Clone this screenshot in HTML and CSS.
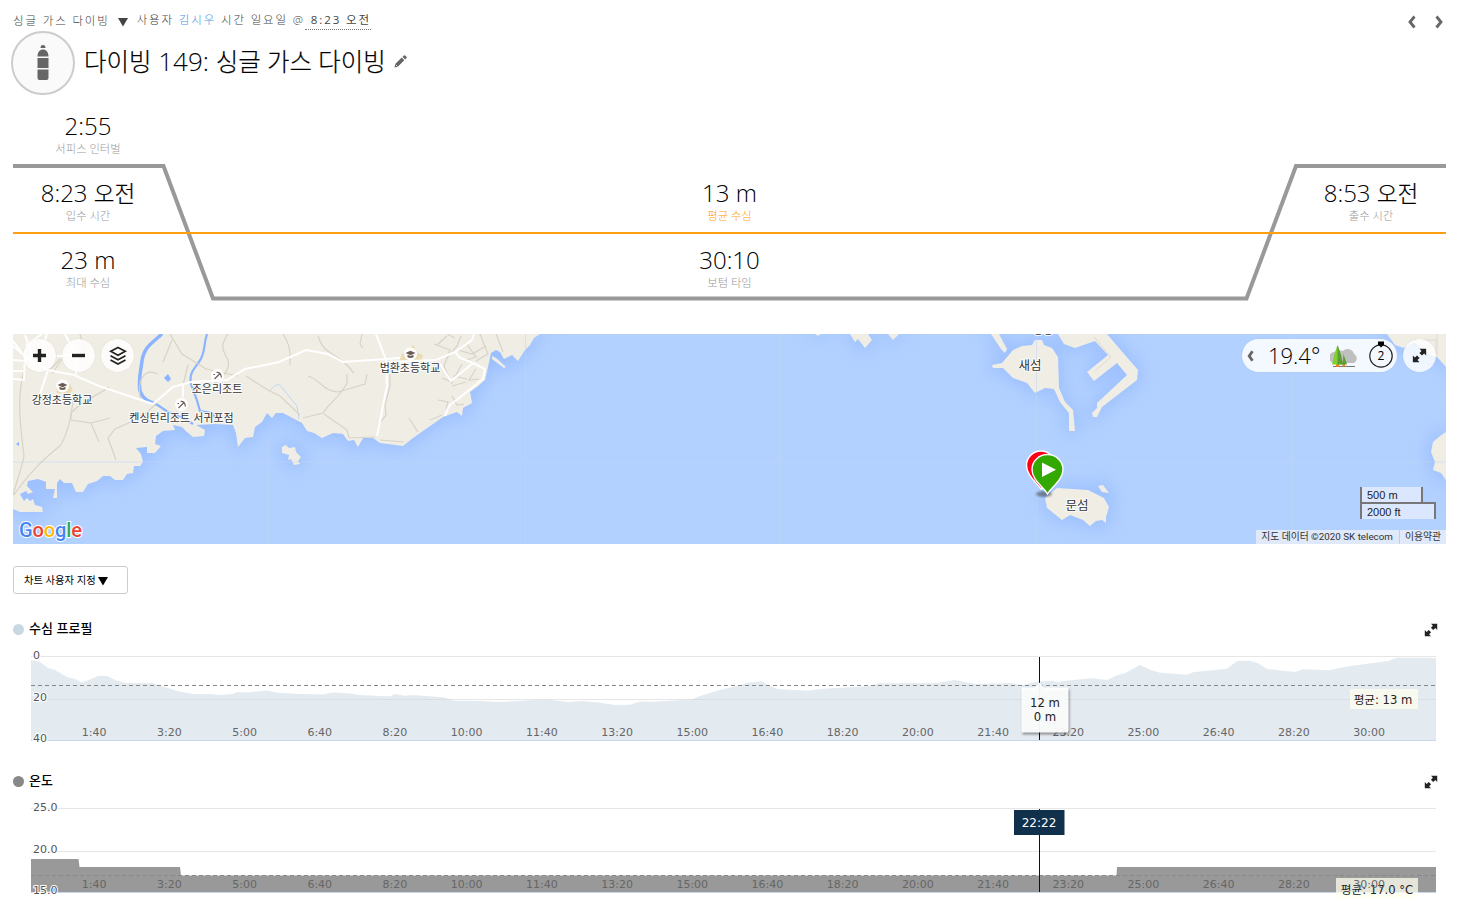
FILE: index.html
```
<!DOCTYPE html>
<html lang="ko">
<head>
    <meta charset="UTF-8">
    <meta name="viewport" content="width=device-width, initial-scale=1.0">
    <title>다이빙 149: 싱글 가스 다이빙</title>
    <link rel="stylesheet" href="styles.css">
</head>
<body>
    <div class="page">
        <header class="header">
            <div class="meta">
                <span>싱글 가스 다이빙</span>
                <svg class="caret" width="10" height="9" viewBox="0 0 10 9"><path d="M0 0h10L5 8.5z"/></svg>
                <span>사용자 <a href="#">김시우</a> 시간 일요일 @<span class="time"> 8:23 오전</span></span>
            </div>
            <nav class="pager">
                <svg width="8" height="14" viewBox="0 0 8 14"><path d="M6.500 1.500L2 7l4.500 5.500"/></svg>
                <svg width="8" height="14" viewBox="0 0 8 14"><path d="M1.500 1.500L6 7l-4.500 5.500"/></svg>
            </nav>
        </header>
        <div class="title">
            <div class="type-icon">
                <svg width="12" height="36" viewBox="0 0 12 36">
                    <path d="M3.500 3a2.500 3 0 0 1 5 0zM.5 11.500C.5 7 3 4.500 6 4.500s5.500 2.500 5.500 7zM.5 13h11v10H.5zM.5 24.500h11V33q0 2-2 2h-7q-2 0-2-2z"/>
                </svg>
            </div>
            <h1><span class="ko">다이빙</span> 149: <span class="ko">싱글 가스 다이빙</span></h1>
            <svg class="pencil" width="13" height="13" viewBox="0 0 13 13"><path d="M8.500 1.800l1.400-1.400q.6-.5 1.200 0l1.400 1.400q.5.600 0 1.200L11.100 4.400zM7.700 2.600l2.600 2.600-6.500 6.500L.5 12.500l.7-3.400z"/><path class="tip" d="M1.700 9.700l1.600 1.600"/></svg>
        </div>

        <section class="dive">
            <svg class="dive-line" width="1433" height="202" viewBox="0 0 1433 202">
                <path class="profile" d="M0 67h150.500l49.500 132.500h1033.500L1283 67h150"/>
                <path class="average" d="M0 134h1433"/>
            </svg>
            <div class="stat"><b>2:55</b><span>서피스 인터벌</span></div>
            <div></div>
            <div></div>
            <div class="stat"><b>8:23 <span class="ko">오전</span></b><span>입수 시간</span></div>
            <div class="stat avg"><b>13 m</b><span>평균 수심</span></div>
            <div class="stat"><b>8:53 <span class="ko">오전</span></b><span>출수 시간</span></div>
            <div class="stat"><b>23 m</b><span>최대 수심</span></div>
            <div class="stat"><b>30:10</b><span>보텀 타임</span></div>
            <div></div>
        </section>

        <section class="map">
            <svg class="tiles" width="1433" height="210" viewBox="13 334 1433 210">
                <defs>
                    <filter id="shallow" x="-20%" y="-20%" width="140%" height="140%"><feGaussianBlur stdDeviation="9"/></filter>
                    <filter id="soft"><feGaussianBlur stdDeviation="1"/></filter>
                    <g id="land">
                        <path d="M13 334V509L20 512 43 512 42 507 35 505 33 499 30 501 27 498 24 501 20 494 26 491 28 494 33 492 27 486 28 481 38 479 46 482 46 489 55 489 53 498 57 498 57 483 60 479 64 483 72 483 76 492 83 492 88 484 97 481 103 476 110 476 115 480 123 480 127 474 133 473 134 466 140 466 143 462 141 454 136 448 147 447 147 453 155 453 161 446 155 444 156 436 163 431 175 430 173 425 182 427 187 432 193 437 204 436 205 430 196 425 215 424 233 425 236 433 238 447 245 438 253 437 255 427 262 422 267 413 272 418 276 413 283 413 302 423 307 431 314 433 322 438 333 433 343 434 348 441 354 440 358 447 363 438 373 438 380 443 403 446 413 438 443 417 457 412 462 416 463 408 472 403 470 392 477 387 485 380 488 367 491 353 496 350 500 352 504 359 512 355 518 361 525 350 530 345 534 338 540 334z"/>
                        <path d="M282 447L286 445 289 448 295 447 296 452 301 457 298 461 300 464 294 465 291 459 288 460 289 455 282 453z"/>
                        <path d="M492 356l4 2 10 9-2 1-12-9z"/>
                        <path d="M850 334l5 8 3-3 7 9 7-8-4-6zM888 334l5 6 6-6zM815 334l3 2 3-2z"/>
                        <path d="M991 334h8l8 15-2 4-4-4zM992 365L1002 363 1013 350 1022 346 1032 345 1035 340 1042 340 1044 345 1052 348 1058 357 1059 388 1065 402 1073 410 1075 431 1069 431 1069 413 1060 402 1054 389 1045 388 1035 393 1027 383 1013 378 1003 368 993 368z"/>
                        <path d="M1058 334L1064 344 1075 348 1095 341 1108 355 1087 372 1094 381 1117 363 1127 375 1097 403 1097 408 1092 413 1093 417 1097 417 1102 407 1137 380 1138 370 1125 355 1107 334z"/>
                        <path d="M1045 498L1057 488 1088 490 1104 498 1109 507 1106 517 1106 523 1102 520 1096 521 1090 526 1083 520 1070 515 1062 520 1047 508zM1098 486L1103 485 1109 493 1102 492z"/>
                        <path d="M1446 432L1440 436 1433 442 1431 452 1435 462 1433 470 1441 473 1446 480zM1387 334l8 11 9 3 10-6 16 13 7 2 9 10v-33z"/>
                    </g>
                </defs>
                <rect class="sea" x="13" y="334" width="1433" height="210"/>
                <use class="shore" href="#land"/>
                <use class="ground" href="#land"/>
                <path class="tile-edge" d="M13 462h1433M268.500 440v104M525.500 334v210M780.500 334v210M1036.500 334v210M1292.500 334v210"/>
                <path class="school" d="M56 387l14-3 3 6-4 4-12-1zM402 354l12-9 2 7 7 3-2 7h-22z"/>
                <g class="water">
                    <path d="M162 334C152 343 144 347 142 361 141 370 138 379 140 391 143 400 150 402 156 404"/>
                    <path class="mid" d="M156 404l12 8 17 7 8 5M207 334c-4 12-1 18-8 28-6 8-10 12-8 22 4 11 6 15 9 27l12 2 4 6"/>
                    <path class="thin" d="M269 391c7-7 10-9 14-2l14 17 2 13"/>
                </g>
                <path class="pond" d="M164 378l4-4 3 5-3 3zM16 444l3-2v4z"/>
                <g class="paths">
                    <path d="M24 370c-8 30-3 60 0 86-2 12-7 24-11 39M74 393c-2 20-5 40-14 53-16 12-35 32-46 49"/>
                    <path d="M109 387c-10 8-25 12-38 26v7l20 3 8 19M160 398c-10 15-22 21-29 24l-16 7-7 9 8 22M91 423l19-5"/>
                    <path d="M52 374l12-18M40 370l12-2 8-9M80 334l5 20M172 340l-9 22M158 374c-14-7-22 7-17 27M170 334l12 20 24 15 32 7M228 334c-8 12-6 15 0 26 3 11-9 20-14 24M246 376c10 6 18 13 34 20l20 19M183 385l5-20"/>
                    <path d="M283 334c5 8 8 14 7 31M318 336c5 15 12 16 20 22 9 5 11 10 16 15M362 334l-2 10 3 4M308 376c14 5 15 15 30 16l27-8 2-10M347 374v9c-6 13-18 20-24 30l-20 5M324 414l23 16 2 8 26-1M390 374v12l-5 19 1 10-8 10M409 418l9 14M380 440l24 2M430 420l12-5"/>
                    <path d="M434 344l16 6-6 16 8 18M447 358l10-12 4-10M458 350l14 4 14-8M455 338l-8-4M462 364l-10 18-10-4M453 376l14 3M452 386l14-4M437 345l10-9M452 396l5 9 7-1M438 400l10 2-2 7M466 343l10 14-12 4M476 369l-7 11 10-1M496 334l7 18M480 334l8 20-12 7"/>
                </g>
                <g class="roads">
                    <path d="M13 341l13 17 22 12 26 5 25 11 54 18 20-17 18-5 36-2 18-11 34-7 27-12 22 4 15 8 57-4"/>
                    <path d="M376 334l10 26 1 26-10 50M386 362l50-2 19-8 17-12 2-6M455 352l5 6 13 5 12 6-2 10-34 27-4 10M473 363l-22 18-11-17"/>
                    <path d="M13 346l12 10-1 24-11-1M26 358l14-4 7-20M48 370l-8 24M76 374l1-17-12-23M25 346l17-12M13 360l12 1M183 385v12M13 371l11 0M25 335l8 24M57 356l18-1"/>
                </g>
                <path class="harbour" d="M1094 337l17 20-16 14M1414 340h22v16M1437 334v20"/>
                <g class="poi">
                    <circle cx="62.500" cy="386" r="6.500"/><circle cx="410.500" cy="354" r="6.500"/>
                    <circle cx="217.500" cy="375.500" r="6.500"/><circle cx="181.500" cy="404.500" r="6.500"/>
                </g>
                <g class="poi-icon">
                    <path id="cap" d="M57.500 385l5-2.300 5 2.300-5 2.300zM59.500 386.800v2.400q3 1.600 6 0v-2.400l-3 1.300z"/>
                    <use href="#cap" x="348" y="-32"/>
                    <path id="resort" class="stroke" d="M214.500 379l5-5M216.500 372.500q4-1 5 5M213.500 374.500h1.500"/>
                    <use href="#resort" x="-36" y="29"/>
                </g>
                <g class="places">
                    <text x="62" y="403.500">강정초등학교</text>
                    <text x="217" y="392.500">조은리조트</text>
                    <text x="181.500" y="421.500">켄싱턴리조트 서귀포점</text>
                    <text x="410" y="371.500">법환초등학교</text>
                    <text class="isle" x="1030" y="369.500">새섬</text>
                    <text class="isle" x="1077" y="509.500">문섬</text>
                    <text x="1043" y="334">항항</text>
                </g>
                <ellipse class="pin-shadow" cx="1044" cy="494" rx="8" ry="3"/>
                <path class="pin stop" d="M1041 489c-5-7-14.500-14-14.500-23.500a14.500 14.500 0 0 1 29 0c0 9.500-9.500 16.500-14.500 23.500z"/>
                <path class="pin start" d="M1047.500 494c-4-7-15.500-14-15.500-24.500a15.500 15 0 0 1 31 0c0 10.500-11.500 17.500-15.500 24.500z"/>
                <path class="play" d="M1042 462.500v14.500l14-7.200z"/>
            </svg>

            <div class="map-tools">
                <button class="round"><svg width="13" height="13" viewBox="0 0 13 13"><path class="bold" d="M6.500 0v13M0 6.500h13"/></svg></button>
                <button class="round"><svg width="13" height="13" viewBox="0 0 13 13"><path class="bold" d="M0 6.500h13"/></svg></button>
                <button class="round"><svg width="18" height="20" viewBox="0 0 18 20"><path class="line" d="M9 1.500l7.300 3.800L9 9.200 1.700 5.300zM1.500 9.700L9 13.700l7.500-4M1.500 14L9 18l7.500-4"/></svg></button>
            </div>

            <div class="map-info">
                <div class="weather">
                    <svg width="7" height="12" viewBox="0 0 7 12"><path class="chev" d="M5.500 1.200L2.200 6l3.300 4.800"/></svg>
                    <span class="temp">19.4°</span>
                    <svg class="sky" width="28" height="24" viewBox="0 0 28 24">
                        <path fill="#bfbfbf" d="M5 19a5.500 5.500 0 0 1-1-11 8 6 0 0 1 9-1 6.500 6.500 0 0 1 11 3 5 5 0 0 1 0 9z"/>
                        <path fill="#777" d="M3 22h22v1H3z"/>
                        <path fill="#f27f1a" d="M6 20h3v3H6zM12.500 20H15v2.500h-2.500z"/>
                        <path fill="#80d030" d="M7.500 1L11 11l2 9.500H2L4.500 10z"/>
                        <path fill="#5a9e35" d="M7.500 1L11 11l2 9.500H7.500zM13.500 10L17 20.500h-4.500z"/>
                    </svg>
                    <svg class="wind" width="24" height="27" viewBox="0 0 24 27">
                        <circle cx="12" cy="15" r="11.200"/><path d="M9 .5h6v3L12 6.500 9 3.500z"/><text x="12" y="19">2</text>
                    </svg>
                </div>
                <button class="round"><svg width="15" height="15" viewBox="0 0 14 14"><use href="#expand"/></svg></button>
            </div>

            <svg class="google" width="70" height="26" viewBox="0 0 70 26">
                <text x="2" y="19"><tspan fill="#4285f4">G</tspan><tspan fill="#ea4335">o</tspan><tspan fill="#fbbc05">o</tspan><tspan fill="#4285f4">g</tspan><tspan fill="#34a853">l</tspan><tspan fill="#ea4335">e</tspan></text>
            </svg>
            <div class="scale">
                <div class="metric">500 m</div>
                <div class="imperial">2000 ft</div>
            </div>
            <div class="terms"><span>지도 데이터 ©2020 SK telecom</span><span>이용약관</span></div>
        </section>

        <button class="customize">차트 사용자 지정<svg width="10" height="9" viewBox="0 0 10 9"><path d="M0 0h10L5 8.500z"/></svg></button>

        <section class="chart">
            <h2><i class="dot depth"></i><span>수심 프로필</span>
                <svg class="expand" width="14" height="14" viewBox="0 0 14 14">
                    <path id="expand" d="M7 .8h6.200V7L11.300 5.100 9.300 7.100 6.900 4.700 8.900 2.700zM7 13.200H.8V7l1.900 1.900L4.700 6.900l2.400 2.400L5.100 11.300z"/>
                </svg>
            </h2>
            <svg class="plot" width="1405" height="110" viewBox="31 646 1405 110">
                <path class="grid" d="M31 656.500h1405M31 699.500h1405"/>
                <path class="area-depth" d="M31 741V660L40 662 48 668 55 670 67 677 75 679 82 682.500 90 679.500 98 676 107 676 115 680 125 683 152 683 163 686.500 177 691 193 694 210 694 220 695 233 694 237 692 247 692.500 267 690.500 277 692.700 300 694 323 694.500 333 692.500 350 693.500 360 695 390 696.500 395 694 405 695.700 413 695 445 697.500 453 700.700 480 701 498 702 527 700.500 547 699.500 568 702 582 701 600 702.700 615 705 630 704.700 640 701.500 653 701.700 673 700.500 692 699.500 698 696.700 717 690.700 737 686 748 682.700 762 681.300 768 685.300 778 689.300 808 690.700 823 688.700 868 686.300 880 683.300 937 683 955 680 975 684 1010 683 1023 685 1032 682.700 1040 681.300 1053 681 1058 682.300 1063 681 1093 678.300 1107 680 1117 675.300 1125 673.300 1140 665 1150 669.700 1160 672.700 1187 674.700 1193 672.300 1227 668.700 1237 661 1250 660.700 1257 662.700 1267 669 1295 672 1303 669.300 1330 670.300 1340 667.700 1353 665.700 1388 661 1397 657.700 1427 657.700 1436 658.300V741z"/>
                <path class="axis" d="M31 740.500h1405"/>
                <path class="mean" d="M31 685.500h1405"/>
                <g class="ticks" data-y="736"></g>
                <g class="yticks"><text x="33" y="659">0</text><text x="33" y="701">20</text><text x="33" y="742">40</text></g>
                <path class="cursor" d="M1039.500 657v83"/>
                <path class="tip-box" d="M1021.500 687.500h13l5-5 5 5h24v45h-47z"/>
                <g class="tip-text"><text x="1045" y="707">12 m</text><text x="1045" y="721">0 m</text></g>
                <rect class="mean-box" x="1350" y="689" width="68" height="20"/>
                <text class="mean-text" x="1383" y="704">평균: 13 m</text>
            </svg>
        </section>

        <section class="chart">
            <h2><i class="dot temperature"></i><span>온도</span>
                <svg class="expand" width="14" height="14" viewBox="0 0 14 14"><use href="#expand"/></svg>
            </h2>
            <svg class="plot" width="1405" height="110" viewBox="31 798 1405 110">
                <path class="grid" d="M31 808.500h1405M31 851.500h1405"/>
                <path class="area-temp" d="M31 892V859h47.500l1 8H180l1 8.500h935.500l.5-8.500h319v25z"/>
                <path class="axis" d="M31 892.500h1405"/>
                <path class="mean" d="M31 875.500h1405"/>
                <rect class="mean-box" x="1336" y="878" width="82" height="21"/>
                <text class="mean-text" x="1377" y="893.500">평균: 17.0 °C</text>
                <g class="ticks" data-y="888"></g>
                <g class="yticks"><text x="33" y="811">25.0</text><text x="33" y="853">20.0</text><text x="33" y="894">15.0</text></g>
                <path class="cursor" d="M1039.500 809v83"/>
                <rect class="time-box" x="1014" y="810" width="50.500" height="25"/>
                <text class="time-text" x="1039" y="827">22:22</text>
            </svg>
        </section>
    </div>

    <script>
        // one time label every 100 seconds
        document.querySelectorAll('.ticks').forEach(function(group) {
            for (let i = 1; i <= 18; i++) {
                const seconds = i * 100;
                const text = document.createElementNS('http://www.w3.org/2000/svg', 'text');
                text.setAttribute('x', 31.3 + i * 75.2);
                text.setAttribute('y', group.dataset.y);
                text.textContent = Math.floor(seconds / 60) + ':' + String(seconds % 60).padStart(2, '0');
                group.appendChild(text);
            }
        });
    </script>
</body>
</html>
```
FILE: styles.css
```
body {
    margin: 0;
    background-color: #fff;
    color: #000;
    font-family: "Open Sans", "Noto Sans CJK KR", sans-serif;
    overflow: hidden;
}
.page {
    width: 1433px;
    margin-left: 13px;
}
.header {
    display: flex;
    justify-content: space-between;
    height: 31px;
}
.meta {
    display: flex;
    align-items: center;
    height: 20px;
    margin-top: 10px;
    font-size: 11.5px;
    font-weight: 300;
    letter-spacing: 1.85px;
    color: #444;
    white-space: nowrap;
}
.meta a {
    color: #4a90e2;
    text-decoration: none;
}
.meta .caret {
    margin: 4px 9px 0 8px;
    fill: #444;
}
.meta .time {
    display: inline-block;
    padding-left: 6px;
    height: 18px;
    line-height: 18px;
    border-bottom: 1px dotted #777;
    font-weight: 400;
    letter-spacing: 1.9px;
}
.pager {
    display: flex;
    gap: 19px;
    padding: 15px 3px 0 0;
}
.pager path, .chev {
    fill: none;
    stroke: #666;
    stroke-width: 2.8;
}
.title {
    display: flex;
    align-items: center;
    height: 64px;
    margin-left: -2px;
}
.type-icon {
    display: flex;
    align-items: center;
    justify-content: center;
    box-sizing: border-box;
    width: 64px;
    height: 64px;
    border: 2px solid #ccc;
    border-radius: 50%;
    background-color: #fafafa;
}
.type-icon svg {
    fill: #666;
}
h1 {
    margin: 0 8px 4px 9px;
    font-size: 26px;
    font-weight: 330;
    line-height: 36px;
    white-space: nowrap;
}
h1 .ko, .stat .ko {
    font-size: .94em;
    font-weight: 200;
    line-height: 1;
    color: #000;
    -webkit-text-stroke: .2px #000;
}
.pencil {
    fill: #666;
    margin-bottom: 3px;
}
.pencil .tip {
    stroke: #fff;
    stroke-width: .8;
}

.dive {
    position: relative;
    display: grid;
    grid-template-columns: 150px 1fr 150px;
    grid-template-rows: repeat(3, 67px);
    height: 202px;
    margin-top: 4px;
}
.dive-line {
    position: absolute;
    top: 0;
    left: 0;
}
.dive-line path {
    fill: none;
}
.dive-line .profile {
    stroke: #999;
    stroke-width: 4;
}
.dive-line .average {
    stroke: #ff9f0f;
    stroke-width: 2;
}
.stat {
    display: flex;
    flex-direction: column;
    align-items: center;
    padding-top: 12px;
}
.stat b {
    font-size: 24px;
    font-weight: 330;
    line-height: 30px;
    height: 31px;
}
.stat > span {
    font-size: 11.3px;
    font-weight: 300;
    line-height: 14px;
    color: #999;
}
.stat.avg > span {
    color: #ff9f0f;
}

.map {
    position: relative;
    height: 210px;
    margin-top: 33px;
    overflow: hidden;
}
.tiles {
    display: block;
}
.sea { fill: #b3d1ff; }
.shore {
    fill: #8bb3ff;
    stroke: #8bb3ff;
    stroke-width: 8;
    opacity: .6;
    filter: url(#shallow);
}
.ground { fill: #f0ede5; }
.tile-edge {
    stroke: #c0d5f5;
    stroke-width: 1;
    opacity: .5;
}
.school { fill: #ecdcb5; }
.pond { fill: #8ab4ff; }
.water path {
    fill: none;
    stroke: #8ab4ff;
    stroke-width: 3.5;
}
.water .mid { stroke-width: 2.2; }
.water .thin {
    stroke: #bdd7f7;
    stroke-width: 1;
}
.paths path {
    fill: none;
    stroke: #d8d3c7;
    stroke-width: 1.2;
}
.roads path {
    fill: none;
    stroke: #fff;
    stroke-width: 2;
}
.harbour {
    fill: none;
    stroke: #e0dbd2;
}
.poi circle { fill: #fff; }
.poi-icon { fill: #6d5c55; }
.poi-icon .stroke {
    fill: none;
    stroke: #6d5c55;
    stroke-width: 1.2;
}
.places text {
    font: 11px "Noto Sans CJK KR", sans-serif;
    fill: #333;
    stroke: #fff;
    stroke-width: 2px;
    stroke-opacity: .8;
    paint-order: stroke;
    text-anchor: middle;
}
.places .isle { font-size: 12.5px; }
.pin-shadow {
    fill: #333;
    opacity: .5;
    filter: url(#soft);
}
.pin {
    stroke: #fff;
    stroke-width: 1.4;
}
.stop { fill: #ff0018; }
.start { fill: #33a800; }
.play { fill: #fff; }

.map-tools, .map-info {
    position: absolute;
    top: 5px;
    display: flex;
}
.map-tools {
    left: 10px;
    gap: 6px;
}
.map-info {
    right: 10px;
    gap: 6px;
}
.round {
    display: flex;
    align-items: center;
    justify-content: center;
    width: 33px;
    height: 33px;
    padding: 0;
    border: none;
    border-radius: 50%;
    background-color: rgba(255, 255, 255, .82);
    box-shadow: 0 0 1px rgba(0, 0, 0, .2);
    cursor: pointer;
    fill: #222;
}
.round .bold {
    stroke: #222;
    stroke-width: 3.4;
}
.round .line {
    fill: none;
    stroke: #222;
    stroke-width: 1.7;
}
.weather {
    display: flex;
    align-items: center;
    box-sizing: border-box;
    width: 155px;
    height: 33px;
    padding-left: 5px;
    border-radius: 17px;
    background-color: rgba(255, 255, 255, .85);
    box-shadow: 0 0 1px rgba(0, 0, 0, .2);
}
.temp {
    margin-left: 14px;
    font-size: 22px;
    font-weight: 320;
    line-height: 33px;
    width: 52px;
}
.sky { margin-left: 10px; }
.wind { margin: 0 0 3px 11px; }
.wind circle {
    fill: none;
    stroke: #222;
    stroke-width: 1.2;
}
.wind text {
    font-size: 12px;
    text-anchor: middle;
}
.google {
    position: absolute;
    left: 4px;
    bottom: 0;
}
.google text {
    font: 500 20px Roboto, sans-serif;
    letter-spacing: -.1px;
    stroke: #fff;
    stroke-width: 2px;
    paint-order: stroke;
}
.scale {
    position: absolute;
    right: 10px;
    bottom: 25px;
    width: 76px;
    font: 11px/14px "Liberation Sans", sans-serif;
    color: #222;
}
.scale div {
    box-sizing: border-box;
    border: 2px solid #777;
    padding-left: 5px;
    height: 17px;
    background-color: #dae7ff;
}
.scale .metric {
    width: 63px;
    height: 15px;
    border-top: none;
    border-bottom: none;
    line-height: 17px;
}
.scale .imperial {
    border-bottom: none;
    line-height: 16px;
}
.terms {
    position: absolute;
    right: 0;
    bottom: 0;
    display: flex;
    gap: 1px;
    font: 9.8px/14px Roboto, "Noto Sans CJK KR", sans-serif;
    color: #333;
}
.terms span {
    padding: 0 6px 0 5px;
    background-color: #dfe9fa;
}
.terms span + span {
    padding-right: 5px;
}

.customize {
    display: flex;
    align-items: center;
    width: 115px;
    height: 28px;
    margin-top: 22px;
    padding: 0 0 1px 10px;
    border: 1px solid #ccc;
    border-radius: 3px;
    background-color: #fff;
    font: 10.3px "Open Sans", "Noto Sans CJK KR", sans-serif;
    color: #000;
    white-space: nowrap;
}
.customize svg {
    margin: 3px 0 0 2px;
}
.chart {
    height: 152px;
}
.customize + .chart {
    margin-top: 20px;
}
.chart h2 {
    display: flex;
    align-items: center;
    height: 31px;
    margin: 0 0 1px;
    font: 500 13px/18px "Noto Sans CJK KR", sans-serif;
}
.chart h2 span {
    padding-bottom: 3px;
}
.dot {
    width: 11px;
    height: 11px;
    margin-right: 5px;
    border-radius: 50%;
}
.dot.depth { background-color: #c8d8e3; }
.dot.temperature { background-color: #888; }
.expand {
    margin: 0 8px 0 auto;
    fill: #222;
}
.plot {
    display: block;
    margin-left: 18px;
    overflow: visible;
    font: 11px "DejaVu Sans", "Noto Sans CJK KR", sans-serif;
}
.grid {
    stroke: #e6e6e6;
}
.area-depth {
    fill: #c8d6e2;
    fill-opacity: .5;
}
.area-temp { fill: #999; }
.axis { stroke: #ccd6eb; }
.mean {
    stroke: #888;
    stroke-dasharray: 4 3;
}
.ticks text {
    fill: #666;
    text-anchor: end;
}
.yticks text {
    fill: #555;
    stroke: #fff;
    stroke-width: 2px;
    paint-order: stroke;
}
.cursor { stroke: #111; }
.tip-box {
    fill: #fff;
    fill-opacity: .94;
    filter: drop-shadow(1px 2px 1px rgba(0, 0, 0, .4));
}
.tip-text text, .mean-text {
    font-size: 12px;
    fill: #222;
    text-anchor: middle;
}
.tip-text text { font-size: 11.7px; }
.mean-text { font-size: 11.6px; }
.mean-box {
    fill: #fffff0;
    fill-opacity: .75;
}
.time-box { fill: #10304c; }
.time-text {
    font-size: 12px;
    fill: #fff;
    text-anchor: middle;
}
```
